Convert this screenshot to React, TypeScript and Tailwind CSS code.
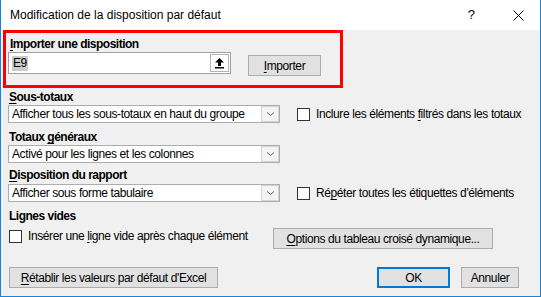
import React from "react";

const U = ({ children }: { children: React.ReactNode }) => (
  <span className="underline underline-offset-[2px] decoration-[1px]">{children}</span>
);

const Chevron = () => (
  <svg width="9" height="6" viewBox="0 0 9 6" className="block">
    <path d="M1 1.5 L4.5 4.5 L8 1.5" fill="none" stroke="#606060" strokeWidth="1" />
  </svg>
);

const Select = ({ text }: { text: string }) => (
  <div className="flex h-[18px] w-[272px] shrink-0 items-stretch border border-[#adadad] bg-white">
    <div className="flex flex-1 items-center overflow-hidden whitespace-nowrap pl-[3px] leading-none">{text}</div>
    <div className="flex w-[18px] items-center justify-center border border-[#d4d4d4] bg-[#f4f4f4]">
      <Chevron />
    </div>
  </div>
);

const Check = () => <div className="h-[13px] w-[13px] shrink-0 border border-[#333333] bg-white" />;

const Btn = ({ children, w, primary }: { children: React.ReactNode; w: string; primary?: boolean }) => (
  <div
    className={`flex h-[21px] items-center justify-center whitespace-nowrap bg-[#e1e1e1] leading-none ${w} ${
      primary ? "border-2 border-[#0078d7]" : "border border-[#adadad]"
    }`}
  >
    {children}
  </div>
);

const Label = ({ children, cls }: { children: React.ReactNode; cls: string }) => (
  <div className={`pl-[1px] font-bold tracking-[-0.5px] ${cls}`}>{children}</div>
);

export default function App() {
  return (
    <div className="h-[297px] w-[541px] overflow-hidden whitespace-nowrap border-x border-b border-[#1883d7] bg-[#f0f0f0] font-['Liberation_Sans',Arial,sans-serif] text-[12px] leading-[16px] text-[#000]">
      {/* title bar */}
      <div className="flex h-[30px] items-center bg-white pl-[9px]">
        <div className="flex-1">Modification de la disposition par défaut</div>
        <div className="mr-[38px] text-[13px]">?</div>
        <svg width="11" height="11" viewBox="0 0 11 11" className="mr-[16px]">
          <path d="M0.5 0.5 L10.5 10.5 M10.5 0.5 L0.5 10.5" stroke="#000" strokeWidth="1" />
        </svg>
      </div>

      <div className="tracking-[-0.4px]">
        {/* red highlight box */}
        <div className="ml-[2px] h-[58px] w-[340px] border-[3px] border-[#ff0000] pl-[2px] pt-[4px]">
          <Label cls="h-[15px] pl-[2px] leading-[15px]">
            <U>I</U>mporter une disposition
          </Label>
          <div className="flex items-start">
            <div className="flex h-[22px] w-[223px] items-center border border-[#a0a0a0] bg-white pl-[3px] pr-[1px]">
              <span className="bg-[#cccccc] px-[1px] leading-[15px]">E9</span>
              <div className="flex-1" />
              <div className="flex h-[18px] w-[19px] items-center justify-center border border-[#b4b4b4] bg-white">
                <svg width="11" height="12" viewBox="0 0 11 12">
                  <path d="M5.5 1 L10 5.5 L7 5.5 L7 9 L4 9 L4 5.5 L1 5.5 Z" fill="#000" />
                  <rect x="1" y="10" width="9" height="1.5" fill="#000" />
                </svg>
              </div>
            </div>
            <div className="ml-[17px] mt-[3px]">
              <Btn w="w-[73px]">
                <U>I</U>mporter
              </Btn>
            </div>
          </div>
        </div>

        {/* body */}
        <div className="flex flex-col pl-[7px]">
          <Label cls="mt-[1px] h-[16px] leading-[16px]">
            <U>S</U>ous-totaux
          </Label>
          <div className="flex items-center">
            <Select text="Afficher tous les sous-totaux en haut du groupe" />
            <div className="ml-[17px] flex items-center gap-[6px]">
              <Check />
              <span>
                Inclure les éléments <U>f</U>iltrés dans les totaux
              </span>
            </div>
          </div>

          <Label cls="mt-[6px] h-[16px] leading-[16px]">
            Totaux <U>g</U>énéraux
          </Label>
          <Select text="Activé pour les lignes et les colonnes" />

          <Label cls="mt-[4px] h-[17px] leading-[17px]">
            <U>D</U>isposition du rapport
          </Label>
          <div className="flex items-center">
            <Select text="Afficher sous forme tabulaire" />
            <div className="ml-[17px] flex items-center gap-[6px]">
              <Check />
              <span>
                Ré<U>p</U>éter toutes les étiquettes d'éléments
              </span>
            </div>
          </div>

          <Label cls="mt-[6px] h-[16px] leading-[16px]">Lignes vides</Label>
          <div className="mt-[5px] flex items-start">
            <div className="ml-[1px] mt-[-1px] flex w-[264px] items-center gap-[6px]">
              <Check />
              <span>
                Insérer une <U>l</U>igne vide après chaque élément
              </span>
            </div>
            <div className="-mt-[1px]">
              <Btn w="w-[220px]">
                <U>O</U>ptions du tableau croisé dynamique...
              </Btn>
            </div>
          </div>

          <div className="mt-[18px] flex items-center">
            <div className="ml-[1px]">
              <Btn w="w-[209px]">
                <U>R</U>établir les valeurs par défaut d'Excel
              </Btn>
            </div>
            <div className="ml-[159px]">
              <Btn w="w-[73px]" primary>
                OK
              </Btn>
            </div>
            <div className="ml-[11px]">
              <Btn w="w-[58px]">Annuler</Btn>
            </div>
          </div>
        </div>
      </div>
    </div>
  );
}
